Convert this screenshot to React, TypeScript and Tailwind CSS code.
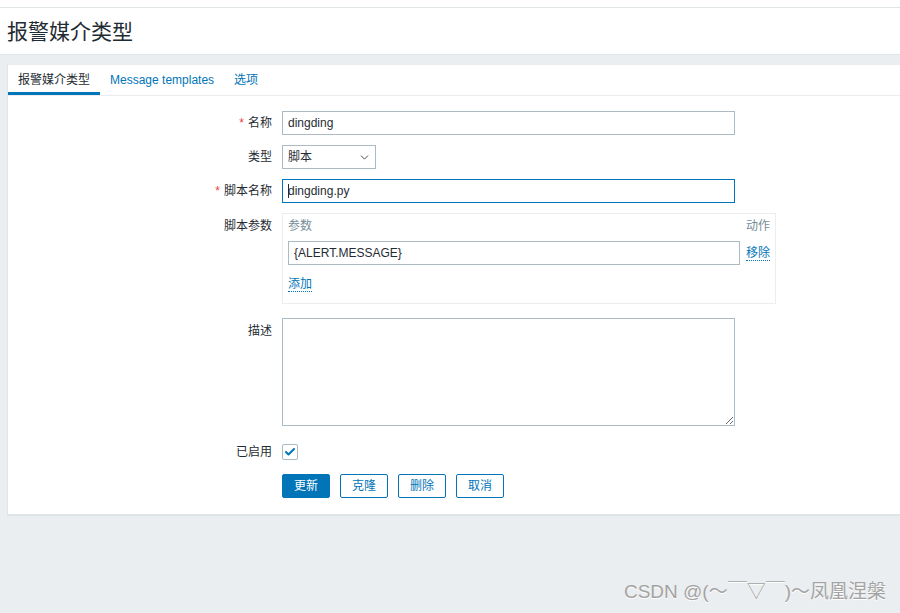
import { Check, ChevronDown } from "lucide-react";

const font = "font-['Liberation_Sans','Noto_Sans_CJK_SC',sans-serif]";

export default function App() {
  return (
    <div className={`flex min-h-[613px] flex-col bg-[#ebeef0] text-[12px] text-[#1f2c33] ${font}`}>
      {/* Page header */}
      <div className="h-[7px] bg-white" />
      <header className="flex h-[48px] items-center border-t border-b border-[#dfe4e7] bg-white px-[7px]">
        <h1 className="text-[21px] leading-none text-[#1f2c33]">报警媒介类型</h1>
      </header>

      {/* Main panel */}
      <section className="ml-[7px] mt-[10px] border-b-2 border-l border-[#dfe4e7] bg-white">
        <nav className="flex h-[31px] items-end border-b border-[#ebeef0]">
          <div className="flex h-[31px] items-center border-b-[3px] border-[#0275b8] px-[10px] pt-[3px]">
            报警媒介类型
          </div>
          <div className="flex h-[31px] items-center px-[10px] text-[#0275b8]">Message templates</div>
          <div className="flex h-[31px] items-center px-[10px] text-[#0275b8]">选项</div>
        </nav>

        <form className="flex flex-col pb-[16px] pt-[15px]">
          <Row label="名称" required>
            <TextInput value="dingding" />
          </Row>

          <Row label="类型" className="mt-[10px]">
            <div className="flex h-[24px] w-[94px] items-center justify-between border border-[#acbbc3] bg-white pl-[5px] pr-[4px]">
              <span>脚本</span>
              <ChevronDown className="h-[13px] w-[13px] text-[#3c454a]" strokeWidth={1.75} />
            </div>
          </Row>

          <Row label="脚本名称" required className="mt-[10px]">
            <div className="relative">
              <TextInput value="dingding.py" focused />
              <span className="absolute left-[6px] top-[5px] h-[14px] w-px bg-[#1f2c33]" />
            </div>
          </Row>

          <Row label="脚本参数" className="mt-[10px]" labelTop>
            <div className="flex h-[91px] w-[494px] flex-col border border-[#ebeef0] px-[5px]">
              <div className="flex h-[27px] items-center justify-between pb-[3px] text-[#768d99]">
                <span>参数</span>
                <span>动作</span>
              </div>
              <div className="flex items-center">
                <input
                  readOnly
                  value="{ALERT.MESSAGE}"
                  className="h-[24px] w-[453px] border border-[#acbbc3] px-[5px] text-[12px] text-[#1f2c33] outline-none"
                />
                <span className="ml-[6px] whitespace-nowrap border-b border-dotted border-[#0275b8] leading-[14px] text-[#0275b8]">
                  移除
                </span>
              </div>
              <div className="mt-[10px]">
                <span className="border-b border-dotted border-[#0275b8] leading-[14px] text-[#0275b8]">添加</span>
              </div>
            </div>
          </Row>

          <Row label="描述" className="mt-[14px]" labelTop>
            <textarea
              readOnly
              className="block h-[108px] w-[453px] border border-[#acbbc3] bg-white outline-none"
            />
          </Row>

          <Row label="已启用" className="mt-[17px]">
            <div className="flex h-[16px] w-[16px] items-center justify-center rounded-[2px] border border-[#acbbc3] bg-white">
              <Check className="h-[12px] w-[12px] text-[#0275b8]" strokeWidth={4} />
            </div>
          </Row>

          <div className="mt-[13px] flex gap-[10px] pl-[274px]">
            <button type="button" className="h-[24px] w-[48px] rounded-[2px] border border-[#0275b8] bg-[#0275b8] text-[12px] text-white">
              更新
            </button>
            <OutlineButton>克隆</OutlineButton>
            <OutlineButton>删除</OutlineButton>
            <OutlineButton>取消</OutlineButton>
          </div>
        </form>
      </section>

      {/* Watermark */}
      <div className="mt-auto flex justify-end pb-[7px] pr-[14px]">
        <span className="text-[19px] text-[#a3a3a3] [text-shadow:0_1px_0_#ffffff]">CSDN @(～￣▽￣)～凤凰涅槃</span>
      </div>
    </div>
  );
}

function Row({
  label,
  required,
  labelTop,
  className = "",
  children,
}: {
  label: string;
  required?: boolean;
  labelTop?: boolean;
  className?: string;
  children: React.ReactNode;
}) {
  return (
    <div className={`flex ${labelTop ? "items-start" : "items-center"} ${className}`}>
      <label className={`w-[264px] text-right ${labelTop ? "pt-[4px]" : ""}`}>
        {required && <span className="mr-[4px] text-[#e54545]">*</span>}
        {label}
      </label>
      <div className="ml-[10px]">{children}</div>
    </div>
  );
}

function TextInput({ value, focused }: { value: string; focused?: boolean }) {
  return (
    <input
      readOnly
      value={value}
      className={`block h-[24px] w-[453px] border bg-white px-[5px] text-[12px] text-[#1f2c33] outline-none ${
        focused ? "border-[#0275b8]" : "border-[#acbbc3]"
      }`}
    />
  );
}

function OutlineButton({ children }: { children: React.ReactNode }) {
  return (
    <button
      type="button"
      className="h-[24px] w-[48px] rounded-[2px] border border-[#0275b8] bg-white text-[12px] text-[#0275b8]"
    >
      {children}
    </button>
  );
}
